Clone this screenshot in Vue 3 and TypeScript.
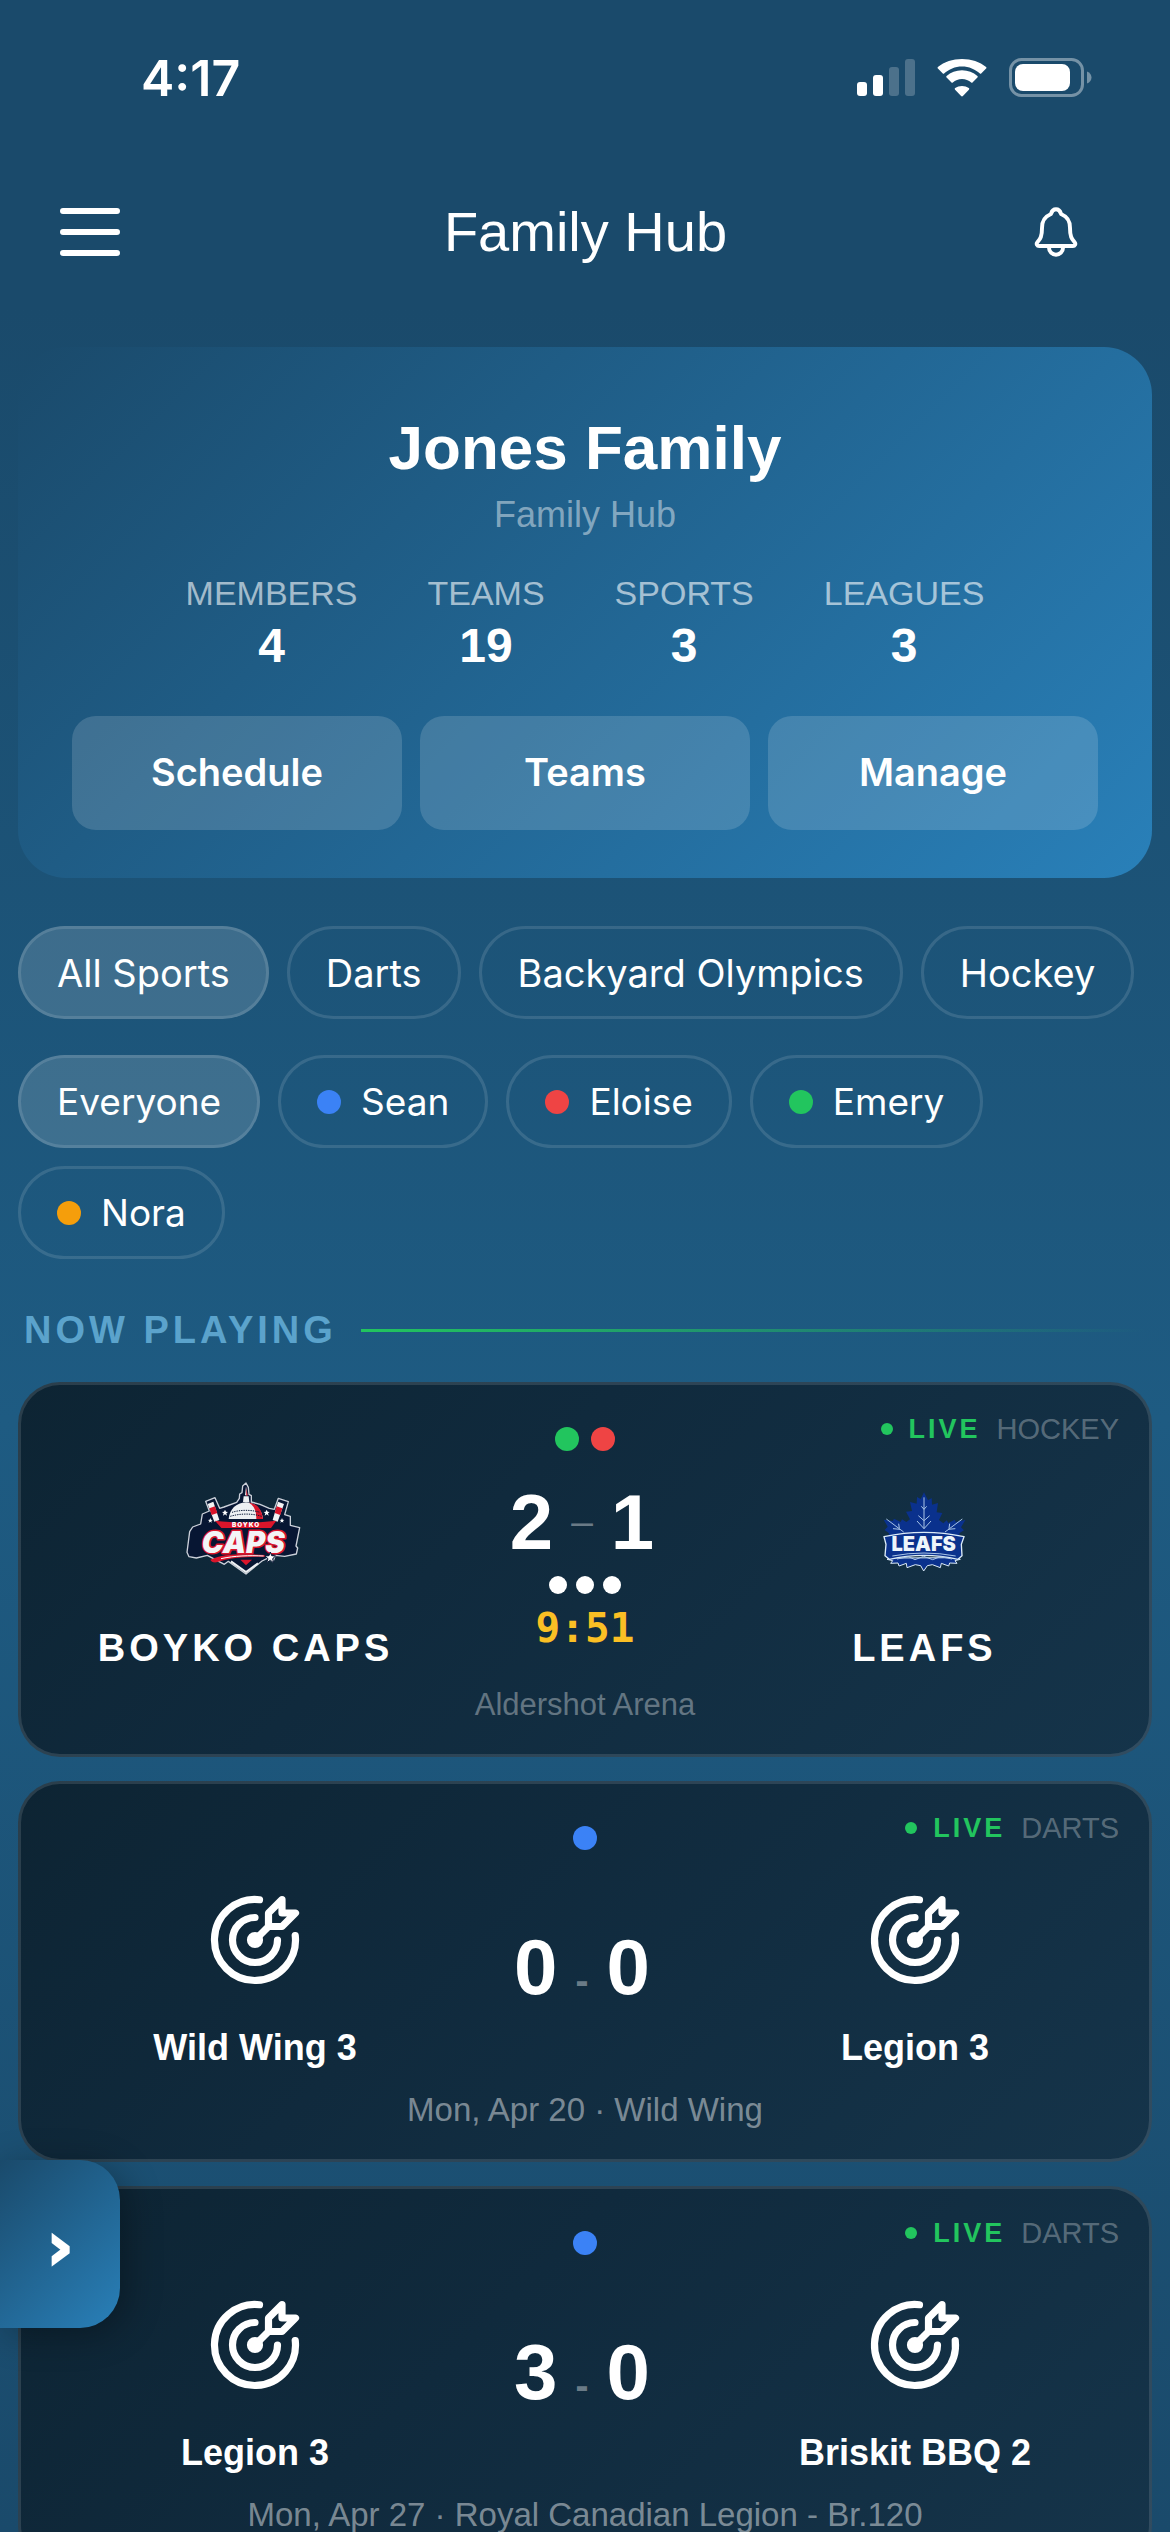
<script setup lang="ts">
import { ref } from 'vue'

interface Stat { label: string; value: number }
interface Member { name: string; color: string }
interface Game {
  id: number
  sport: string
  kind: 'hockey' | 'darts'
  home: string
  away: string
  homeScore: number
  awayScore: number
  clock?: string
  periods?: number
  info: string
  players: string[]
}

const blue = '#3b82f6'
const red = '#ef4444'
const green = '#22c55e'
const amber = '#f59e0b'

const stats: Stat[] = [
  { label: 'MEMBERS', value: 4 },
  { label: 'TEAMS', value: 19 },
  { label: 'SPORTS', value: 3 },
  { label: 'LEAGUES', value: 3 },
]
const actions = ['Schedule', 'Teams', 'Manage']
const sports = ['All Sports', 'Darts', 'Backyard Olympics', 'Hockey']
const members: Member[] = [
  { name: 'Sean', color: blue },
  { name: 'Eloise', color: red },
  { name: 'Emery', color: green },
  { name: 'Nora', color: amber },
]
const games: Game[] = [
  {
    id: 1, sport: 'HOCKEY', kind: 'hockey', home: 'BOYKO CAPS', away: 'LEAFS',
    homeScore: 2, awayScore: 1, clock: '9:51', periods: 3, info: 'Aldershot Arena', players: [green, red],
  },
  {
    id: 2, sport: 'DARTS', kind: 'darts', home: 'Wild Wing 3', away: 'Legion 3',
    homeScore: 0, awayScore: 0, info: 'Mon, Apr 20 · Wild Wing', players: [blue],
  },
  {
    id: 3, sport: 'DARTS', kind: 'darts', home: 'Legion 3', away: 'Briskit BBQ 2',
    homeScore: 3, awayScore: 0, info: 'Mon, Apr 27 · Royal Canadian Legion - Br.120', players: [blue],
  },
]

const sport = ref('All Sports')
const person = ref('Everyone')
</script>

<template>
  <div class="app">
    <div class="status">
      <span class="time">4:17</span>
      <div class="status-icons">
        <svg width="58" height="38" viewBox="0 0 58 38" fill="#fff" aria-hidden="true">
          <rect x="0" y="23" width="10" height="14" rx="3" />
          <rect x="16" y="16" width="10" height="21" rx="3" />
          <rect x="32" y="8" width="10" height="29" rx="3" opacity=".22" />
          <rect x="48" y="0" width="10" height="37" rx="3" opacity=".22" />
        </svg>
        <svg width="50" height="38" viewBox="0 0 50 38" fill="#fff" aria-hidden="true">
          <path d="M25 7.500c6.900 0 13.200 2.700 17.900 7.100.4.300.9.300 1.300 0l4.900-5c.5-.5.500-1.200 0-1.700C42.700 3 34.300 0 25 0S7.300 3 .9 7.900c-.5.500-.5 1.200 0 1.700l4.900 5c.4.300.9.300 1.300 0C11.800 10.200 18.100 7.500 25 7.500z" />
          <path d="M25 20c3.500 0 6.700 1.300 9.200 3.500.4.300.9.300 1.300 0l4.900-5c.5-.5.400-1.200 0-1.600-4.100-3.600-9.500-5.700-15.400-5.700S13.700 13.300 9.600 16.900c-.4.400-.5 1.100 0 1.600l4.900 5c.4.300.9.300 1.300 0C18.300 21.300 21.500 20 25 20z" />
          <path d="M25.900 37l6-6.200c.5-.5.500-1.300-.1-1.700-1.900-1.400-4.200-2.200-6.800-2.200s-4.900.8-6.800 2.200c-.6.400-.6 1.200-.1 1.700l6 6.200c.5.500 1.300.5 1.800 0z" />
        </svg>
        <svg width="83" height="40" viewBox="0 0 83 40" aria-hidden="true">
          <rect x="1.500" y="1.500" width="72" height="36" rx="11" fill="none" stroke="#fff" stroke-opacity=".4" stroke-width="3" />
          <path d="M78 13.500c3 1.200 4.500 3.400 4.500 6s-1.500 4.800-4.500 6z" fill="#fff" fill-opacity=".4" />
          <rect x="6" y="6" width="55" height="27" rx="8" fill="#fff" />
        </svg>
      </div>
    </div>

    <header class="topbar">
      <button class="icon-btn" type="button" aria-label="Menu">
        <svg width="60" height="48" viewBox="0 0 60 48" stroke="#fff" stroke-width="6" stroke-linecap="round" aria-hidden="true">
          <path d="M3 3h54M3 24h54M3 45h54" />
        </svg>
      </button>
      <h1>Family Hub</h1>
      <button class="icon-btn bell" type="button" aria-label="Notifications">
        <svg width="56" height="56" viewBox="0 0 512 512" fill="none" stroke="#fff" stroke-width="36" stroke-linecap="round" stroke-linejoin="round" aria-hidden="true">
          <path d="M427.680 351.430C402 320 383.870 304 383.870 217.350 383.870 138 343.350 109.730 310 96c-4.430-1.820-8.600-6-9.950-10.550C294.200 65.540 277.800 48 256 48s-38.210 17.550-44 37.470c-1.350 4.600-5.520 8.710-9.950 10.530-33.390 13.750-73.870 41.920-73.870 121.350C128.130 304 110 320 84.320 351.430 73.680 364.450 83 384 101.610 384h308.880c18.510 0 27.770-19.610 17.190-32.570zM320 384v16a64 64 0 01-128 0v-16" />
        </svg>
      </button>
    </header>

    <main class="content">
      <section class="hero">
        <h2>Jones Family</h2>
        <p class="sub">Family Hub</p>
        <dl class="stats">
          <div v-for="s in stats" :key="s.label">
            <dt>{{ s.label }}</dt>
            <dd>{{ s.value }}</dd>
          </div>
        </dl>
        <div class="actions">
          <button v-for="a in actions" :key="a" type="button">{{ a }}</button>
        </div>
      </section>

      <div class="chips">
        <button v-for="s in sports" :key="s" type="button" class="chip" :class="{ active: sport === s }" @click="sport = s">{{ s }}</button>
      </div>
      <div class="chips people">
        <button type="button" class="chip" :class="{ active: person === 'Everyone' }" @click="person = 'Everyone'">Everyone</button>
        <button v-for="m in members" :key="m.name" type="button" class="chip" :class="{ active: person === m.name }" @click="person = m.name">
          <span class="dot" :style="{ background: m.color }"></span>{{ m.name }}
        </button>
      </div>

      <h3 class="section-title">NOW PLAYING</h3>

      <div class="games">
        <article v-for="g in games" :key="g.id" class="game" :class="g.kind">
          <div class="tag"><span class="live-dot"></span><strong>LIVE</strong><span class="sport">{{ g.sport }}</span></div>
          <div class="players">
            <span v-for="c in g.players" :key="c" class="dot" :style="{ background: c }"></span>
          </div>
          <div class="match">
            <div class="team">
              <svg v-if="g.kind === 'hockey'" class="logo" viewBox="78 63 360 288" aria-hidden="true">
                <path d="M258 69l7 13 2 21 7 4v19l26 7 28 12 15 3 12-33 30 10-11 39 17 5v27l28 7-11 55 5 6-4 18-35 7-28-3-7 19-17-10-16 8-48 39-53-38-12 9-51-27-33 8-22-4-6-13 8-62 9-14 24-9 5-30 21-9-11-29 28-11 14 32 13-4 38-14 8-12 1-13 7-4 2-20z" fill="#071633" stroke="#cbd0d9" stroke-width="4" stroke-linejoin="round" />
                <path d="M206 177c3-30 22-48 52-50 30 2 47 20 51 50z" fill="#edf0f3" />
                <path d="M267 128c25 3 39 21 42 49h-20c0-24-6-40-22-49z" fill="#d9152b" />
                <path d="M216 157c25-8 58-8 84 0M211 169c29-9 65-9 94 0" fill="none" stroke="#071633" stroke-width="3" stroke-dasharray="4 3" />
                <path d="M249 126l2-17h15l2 17zM255 106l3-27 4 27z" fill="#edf0f3" />
                <path d="M259 84l4 23h-4z" fill="#d9152b" />
                <path d="M143 132l17-7 18 55-15 5zM372 132l-18-7-16 55 15 5z" fill="#f3f3f4" />
                <path d="M148 145l17-6 7 20-17 6zM367 145l-17-6-6 20 17 6z" fill="#d9152b" />
                <path d="M195 149l3 6 6 1-5 4 2 7-6-4-6 4 2-7-5-4 6-1zM320 149l3 6 6 1-5 4 2 7-6-4-6 4 2-7-5-4 6-1zM151 174l2 5 5 1-4 3 1 5-4-3-5 3 2-5-4-3 5-1zM366 174l2 5 5 1-4 3 1 5-4-3-5 3 2-5-4-3 5-1z" fill="#fff" />
                <path d="M165 182c55 7 128 7 184 0l-16 22H184z" fill="#d9152b" />
                <text x="258" y="200" text-anchor="middle" font-size="19" fill="#fff" class="mark wide">BOYKO</text>
                <text x="250" y="279" text-anchor="middle" font-size="88" font-style="italic" fill="#f3f4f6" stroke="#d9152b" stroke-width="9" paint-order="stroke" stroke-linejoin="round" class="mark">CAPS</text>
                <path d="M151 299c44-20 103-17 164-14v5c-57 0-100 2-146 17-10 1-16-3-18-8z" fill="#d9152b" />
                <path d="M183 296c40-9 85-10 128-8" fill="none" stroke="#fff" stroke-width="3" />
                <path d="M213 304l45 32 36-26" fill="none" stroke="#edf0f3" stroke-width="6" />
                <path d="M241 299h35l-18 17z" fill="#d9152b" />
                <path d="M331 276l4 11 12 1-9 8 3 12-10-7-11 7 4-12-10-8 13-1z" fill="#fff" stroke="#071633" stroke-width="3" />
              </svg>
              <svg v-else class="target" viewBox="0 0 24 24" aria-hidden="true">
                <circle cx="12" cy="12" r="1" fill="#fff" />
                <path d="M12 7a5 5 0 1 0 5 5M13 3.055a9 9 0 1 0 7.941 7.945M15 6v3h3l3-3h-3V3zM15 9l-3 3" />
              </svg>
              <span class="name">{{ g.home }}</span>
            </div>

            <div class="middle">
              <div class="score">
                <span>{{ g.homeScore }}</span>
                <span class="dash">{{ g.kind === 'hockey' ? '–' : '-' }}</span>
                <span>{{ g.awayScore }}</span>
              </div>
              <div v-if="g.periods" class="periods"><i v-for="p in g.periods" :key="p"></i></div>
              <div v-if="g.clock" class="clock">{{ g.clock }}</div>
            </div>

            <div class="team">
              <svg v-if="g.kind === 'hockey'" class="logo" viewBox="72 63 360 288" aria-hidden="true">
                <path d="M252 97l12 24 11-7 1 20 18-5-4 28 17 2-10 21 13 10 10-9 5 8 19-10 3 7 29-6-13 22 9 9-14 9 3 18H143l4-18-13-10 9-10-12-21 27 4 4-7 20 10 4-8 13 8 11-8-12-23 18-2-6-27 20 5 1-20 11 6z" fill="#0a318d" />
                <path d="M252 206V112M252 148l-8-9M252 148l8-9M252 182l-17-15M252 182l17-15M252 206l-21-23M252 206l21-23M191 216l-52-39M180 208l-21-2M178 205l-2-14M315 216l52-39M324 208l22-2M327 205l2-14" fill="none" stroke="#a9c5e7" stroke-width="3" />
                <path d="M152 294l-11 4 17 4-6 8 22-1 3 9 22-8 2 13 25-9 16 3 9 16 11-16 15-3 24 9 3-13 22 8 3-9 22 1-6-8 16-4-11-5z" fill="#0a318d" stroke="#dcebf8" stroke-width="3" />
                <path d="M132 230q120-26 240 0l-8 23 2 34-12 11q-102-24-206 0l-13-11 3-34z" fill="#0a318d" stroke="#dcebf8" stroke-width="4" />
                <path d="M157 288q95-18 190 0M171 297l34-7 20 9 26-10 27 10 23-9 35 7" fill="none" stroke="#a9c5e7" stroke-width="3" />
                <text x="251" y="274" text-anchor="middle" font-size="60" fill="#eef5fb" class="mark">LEAFS</text>
              </svg>
              <svg v-else class="target" viewBox="0 0 24 24" aria-hidden="true">
                <circle cx="12" cy="12" r="1" fill="#fff" />
                <path d="M12 7a5 5 0 1 0 5 5M13 3.055a9 9 0 1 0 7.941 7.945M15 6v3h3l3-3h-3V3zM15 9l-3 3" />
              </svg>
              <span class="name">{{ g.away }}</span>
            </div>
          </div>
          <p class="info">{{ g.info }}</p>
        </article>
      </div>
    </main>

    <button class="drawer" type="button" aria-label="Open panel">›</button>
  </div>
</template>

<style>
body {
  margin: 0;
  background: #1a4a6b;
}
</style>

<style scoped>
.app {
  display: flex;
  flex-direction: column;
  height: 100vh;
  overflow: hidden;
  color: #fff;
  background: #1a4a6b;
  font-family: "Liberation Sans", Arial, sans-serif;
}
h1, h2, h3, p, dl, dd { margin: 0; }
button {
  margin: 0;
  padding: 0;
  border: 0;
  color: inherit;
  background: none;
  font-family: Inter, sans-serif;
}
svg { display: block; }

.status {
  flex: none;
  display: flex;
  align-items: center;
  justify-content: space-between;
  height: 156px;
  padding: 0 78px 0 141px;
  font-family: Inter, sans-serif;
}
.time { font-size: 50px; font-weight: 600; line-height: 60px; }
.status-icons { display: flex; align-items: center; gap: 22px; }

.topbar {
  flex: none;
  display: grid;
  grid-template-columns: 1fr auto 1fr;
  align-items: center;
  height: 152px;
  padding: 0 86px 0 60px;
}
.topbar h1 { font-size: 56px; font-weight: 400; line-height: 64px; margin-left: 27px; }
.icon-btn { justify-self: start; }
.bell { justify-self: end; }

.content {
  flex: 1;
  min-height: 0;
  overflow: hidden;
  padding: 39px 18px 0;
  background: linear-gradient(180deg, #1a4a6b 0%, #1e5b82 50%, #1a4a6b 100%);
}

.hero {
  padding: 65px 54px 48px;
  border-radius: 48px;
  background: linear-gradient(135deg, #1a4a6b 0%, #2980b9 100%);
  text-align: center;
}
.hero h2 { font-size: 62px; line-height: 72px; }
.sub { margin-top: 10px; font-size: 36px; line-height: 42px; color: rgba(255, 255, 255, .45); }
.stats { display: flex; justify-content: center; gap: 70px; margin-top: 37px; }
.stats dt { font-size: 34px; line-height: 40px; color: rgba(255, 255, 255, .6); }
.stats dd { margin-top: 6px; font-size: 48px; line-height: 54px; font-weight: 700; }
.actions { display: grid; grid-template-columns: repeat(3, 1fr); gap: 18px; margin-top: 43px; }
.actions button {
  height: 114px;
  padding-bottom: 2px;
  border-radius: 24px;
  background: rgba(255, 255, 255, .15);
  font-size: 38px;
  font-weight: 600;
}

.chips { display: flex; flex-wrap: wrap; gap: 18px; margin-top: 48px; }
.people { margin-top: 36px; }
.chip {
  display: flex;
  align-items: center;
  gap: 20px;
  height: 93px;
  padding: 0 36px;
  border: 3px solid rgba(255, 255, 255, .12);
  border-radius: 47px;
  font-size: 38px;
  font-weight: 400;
}
.people .chip { font-size: 37px; }
.chip.active { background: rgba(255, 255, 255, .15); border-color: rgba(255, 255, 255, .25); background-clip: padding-box; }
.dot { flex: none; width: 24px; height: 24px; border-radius: 50%; }

.section-title {
  display: flex;
  align-items: center;
  gap: 24px;
  margin: 49px 0 30px;
  padding: 0 6px;
  font-size: 38px;
  line-height: 44px;
  letter-spacing: 4px;
  color: #5ba3cc;
}
.section-title::after {
  content: "";
  flex: 1;
  height: 3px;
  background: linear-gradient(90deg, #22c55e, transparent);
}

.games { display: flex; flex-direction: column; gap: 24px; }
.game {
  position: relative;
  padding: 42px 36px 31px;
  border: 3px solid rgba(255, 255, 255, .12);
  border-radius: 42px;
  background: linear-gradient(135deg, #0d2433 0%, #102a3d 40%, #15344a 100%) border-box;
}
.tag {
  position: absolute;
  top: 26px;
  right: 30px;
  display: flex;
  align-items: center;
  line-height: 36px;
}
.live-dot { width: 12px; height: 12px; border-radius: 50%; background: #22c55e; margin-right: 16px; }
.tag strong { font-size: 27px; letter-spacing: 3px; color: #22c55e; margin-right: 16px; }
.sport { font-size: 29px; color: rgba(255, 255, 255, .3); }
.players { display: flex; justify-content: center; gap: 12px; height: 24px; }
.match { display: grid; grid-template-columns: 5fr 4fr 5fr; margin-top: 30px; }
.team { display: flex; flex-direction: column; align-items: center; }
.logo { width: 120px; height: 96px; }
.mark { font-family: Inter, sans-serif; font-weight: 900; }
.wide { letter-spacing: 3px; }
.name { margin-top: 49px; font-size: 38px; line-height: 44px; font-weight: 700; letter-spacing: 4px; }
.middle { display: flex; flex-direction: column; align-items: center; padding-top: 2px; }
.score {
  display: flex;
  align-items: center;
  gap: 18px;
  padding-right: 6px;
  font-size: 78px;
  line-height: 78px;
  font-weight: 700;
}
.dash { font-size: 39px; font-weight: 400; color: rgba(255, 255, 255, .4); }
.periods { display: flex; gap: 9px; margin-top: 15px; }
.periods i { width: 18px; height: 18px; border-radius: 50%; background: #fff; }
.clock {
  margin-top: 13px;
  font-family: "DejaVu Sans Mono", monospace;
  font-size: 41px;
  line-height: 42px;
  font-weight: 700;
  color: #fbbf24;
}
.info { margin-top: 17px; text-align: center; font-size: 31px; line-height: 36px; color: rgba(255, 255, 255, .35); }

.darts .match { grid-template-columns: 3fr 2fr 3fr; margin-top: 36px; }
.target {
  width: 108px;
  height: 108px;
  fill: none;
  stroke: #fff;
  stroke-width: 1.6;
  stroke-linecap: round;
  stroke-linejoin: round;
}
.target circle { fill: #fff; }
.darts .name { margin-top: 32px; font-size: 36px; letter-spacing: normal; }
.darts .score { align-items: baseline; margin-top: 40px; }
.darts .dash { font-weight: 700; }
.darts .info { margin-top: 22px; font-size: 33px; color: rgba(255, 255, 255, .45); }

.drawer {
  position: fixed;
  left: 0;
  bottom: 204px;
  width: 120px;
  height: 168px;
  padding: 4px 0 0;
  border-radius: 0 40px 40px 0;
  background: linear-gradient(135deg, #1a4a6b, #2980b9);
  box-shadow: 6px 6px 36px rgba(0, 0, 0, .3);
  font-family: "DejaVu Sans", sans-serif;
  font-size: 66px;
  font-weight: 700;
  -webkit-text-stroke: 2px #fff;
}
</style>
